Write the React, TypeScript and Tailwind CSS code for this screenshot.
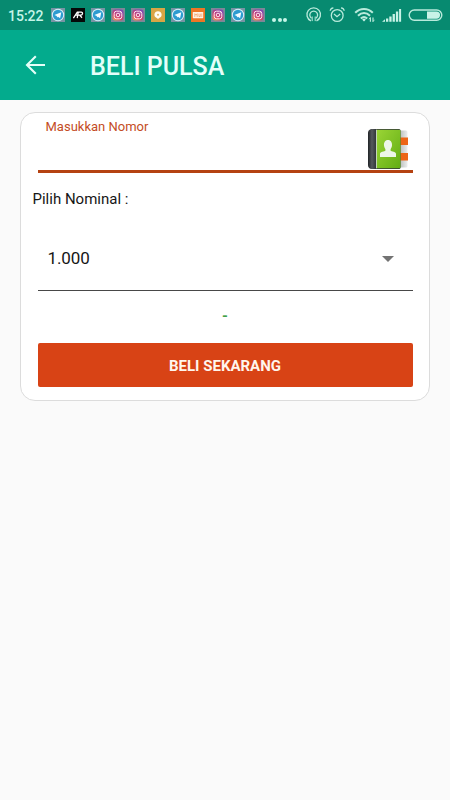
import React from "react";

type Notice = "telegram" | "ap" | "instagram" | "chat" | "mi";

const notices: Notice[] = [
  "telegram", "ap", "telegram", "instagram", "instagram", "chat",
  "telegram", "mi", "instagram", "telegram", "instagram",
];

function NoticeIcon({ kind }: { kind: Notice }) {
  return (
    <svg viewBox="0 0 14 14" className="h-[14px] w-[14px] shrink-0">
      {kind === "telegram" && (
        <>
          <rect width="14" height="14" fill="#7695a5" />
          <circle cx="7" cy="7" r="6.2" fill="#d9f1f8" />
          <circle cx="7" cy="7" r="5.2" fill="#2c9bd0" />
          <path d="M3.4 7 10.3 4.2 9.1 10.2 7 8.7 6 9.6 5.8 7.9Z" fill="#f2fcff" />
        </>
      )}
      {kind === "ap" && (
        <>
          <rect width="14" height="14" fill="#050808" />
          <path d="M2.4 10.2 6.3 4.2H10.3C12.2 4.2 11.8 7.2 9.8 7.2H4.8M7.2 4.5 6.2 10.2M8.9 7.4 11 9.8" fill="none" stroke="#fff" strokeWidth="1.3" />
        </>
      )}
      {kind === "instagram" && (
        <>
          <defs>
            <linearGradient id="insta" x1="0" y1="1" x2="0.6" y2="0">
              <stop offset="0" stopColor="#f6a94f" />
              <stop offset="0.45" stopColor="#d2406f" />
              <stop offset="1" stopColor="#8546b0" />
            </linearGradient>
          </defs>
          <rect width="14" height="14" fill="#7d8798" />
          <rect x="1.5" y="1.5" width="11" height="11" rx="3" fill="url(#insta)" />
          <rect x="3.2" y="3.2" width="7.6" height="7.6" rx="2.3" fill="none" stroke="#ffe5ec" strokeWidth="1" />
          <circle cx="7" cy="7" r="1.8" fill="none" stroke="#ffe5ec" strokeWidth="1" />
          <circle cx="9.2" cy="4.8" r="0.5" fill="#fff" />
        </>
      )}
      {kind === "chat" && (
        <>
          <rect width="14" height="14" fill="#d9a545" />
          <path d="M7 3.2a3.6 3.5 0 0 1 1.2 6.8L7 11.1 5.8 10A3.6 3.5 0 0 1 7 3.2Z" fill="#fffdf2" />
          <circle cx="7" cy="6.7" r="1" fill="#dfb35c" />
        </>
      )}
      {kind === "mi" && (
        <>
          <rect width="14" height="14" fill="#ed7625" />
          <rect x="1.8" y="4" width="10.4" height="6.2" rx="0.6" fill="#fff3e4" />
          <path d="M3.8 9V5.7L5 7.2 6.2 5.7V9M7.9 5.7V8.5H9.3V5.7M10.8 5.5V9" fill="none" stroke="#ef8c4b" strokeWidth="0.6" />
        </>
      )}
    </svg>
  );
}

function SystemIcons() {
  return (
    <svg viewBox="0 0 145 30" className="ml-auto h-[30px] w-[145px]" fill="none" stroke="#b9eadb" strokeWidth="1.3">
      <path d="M5.9 20.8a6.8 6.8 0 1 1 5.6 0" />
      <path d="M6.5 18.2a3.9 3.9 0 1 1 4.4 0" />
      <path d="M7.2 16.5v4.6M10.2 16.5v4.6" strokeWidth="1" />
      <circle cx="32.2" cy="15.5" r="5.9" />
      <path d="M25.2 10.8c.2-1.8 1.4-2.8 3.2-3M39.2 10.8c-.2-1.8-1.4-2.8-3.2-3M29 14l3 2.7 3.2-2.7" />
      <path d="M50.2 12.7c5.3-4.9 12.3-4.9 17.6 0M53 15.7c3.7-3.4 8.3-3.4 12 0M55.8 18.5c2.1-1.8 4.3-1.8 6.4 0" strokeWidth="2.1" />
      <path d="M57.1 19.4 59 21.6 60.9 19.4Q59 18.2 57.1 19.4Z" fill="#c9f3e7" stroke="none" />
      <path d="M65.4 17.5v4.3M68 17.5v4.3" strokeWidth="1.2" />
      <path d="M64 19.2 65.4 17.5M68 21.5 69.4 19.8" strokeWidth="0.9" />
      <g fill="#c9f3e7" stroke="none">
        <path d="M77 21.7 80 19.2V21.7ZM81 18.4h2.3v3.3H81zM84.3 16.4h2.3v5.3h-2.3zM87.6 14.1h2.3v7.6h-2.3zM90.9 11.6h2.3v10.1h-2.3zM94.1 9h2v12.7h-2z" />
      </g>
      <rect x="104.2" y="10" width="32.6" height="10.2" rx="5.1" strokeWidth="1.4" />
      <path d="M122 11.4h9.4a3.65 3.65 0 0 1 0 7.3H122z" fill="#c9f3e7" stroke="none" />
    </svg>
  );
}

function ContactBook() {
  return (
    <svg viewBox="0 0 40 40" className="h-10 w-10 shrink-0">
      <defs>
        <linearGradient id="cover" x1="0" y1="0" x2="1" y2="1">
          <stop stopColor="#9bd536" />
          <stop offset="1" stopColor="#62ad13" />
        </linearGradient>
        <linearGradient id="spine">
          <stop stopColor="#202326" />
          <stop offset="0.12" stopColor="#55595d" />
          <stop offset="0.25" stopColor="#303438" />
          <stop offset="1" stopColor="#303438" />
        </linearGradient>
        <linearGradient id="pages">
          <stop stopColor="#aeb2b1" />
          <stop offset="1" stopColor="#eceeee" />
        </linearGradient>
      </defs>
      <rect x="30" y="1.5" width="9.5" height="37" rx="1.5" fill="url(#pages)" />
      <path d="M32 8.5h8v7.5h-8zM32 24h8v7.5h-8z" fill="#ed6517" />
      <path d="M3 0H31Q32.5 0 32.5 1.5V38.5Q32.5 40 31 40H3Q0 39 0 36V4Q0 1 3 0Z" fill="url(#spine)" />
      <path d="M8.5 0.7H31Q32.5 0.7 32.5 1.7V38.3Q32.5 39.3 31 39.3H8.5Z" fill="url(#cover)" />
      <path d="M8.5 .7v38.6" stroke="#c5d5b7" strokeWidth="1" />
      <path d="M16 16.5c-.7-7.3 8.7-7.3 8 0-.2 1.9-1 2.8-1.4 3.7v1.6c3 1.1 5.4 1.4 5.4 3.2V28H12v-3c0-1.8 2.4-2.1 5.4-3.2v-1.6c-.4-.9-1.2-1.8-1.4-3.7Z" fill="#edf6e8" />
    </svg>
  );
}

export default function App() {
  return (
    <div className="flex h-[800px] w-[450px] flex-col overflow-hidden bg-[#fafafa] font-[Roboto,sans-serif]">
      <div className="flex h-[30px] shrink-0 items-center bg-[#078a70] pl-[8px]">
        <span className="w-[42.5px] pt-[1px] text-[14px] leading-[16px] font-medium text-[#c5f5e8]">15:22</span>
        <div className="flex gap-[6px]">
          {notices.map((kind, i) => <NoticeIcon key={i} kind={kind} />)}
        </div>
        <div className="mt-[9px] ml-[7.5px] flex gap-[1.5px]">
          <i className="h-[4px] w-[4px] rounded-full bg-[#c5f5e8]" />
          <i className="h-[4px] w-[4px] rounded-full bg-[#c5f5e8]" />
          <i className="h-[4px] w-[4px] rounded-full bg-[#c5f5e8]" />
        </div>
        <SystemIcons />
      </div>
      <header className="flex h-[70px] shrink-0 items-center bg-[#03ab8d]">
        <svg viewBox="0 0 20 20" className="ml-[25px] h-5 w-5" fill="none" stroke="#e4fff8" strokeWidth="2.1">
          <path d="M20 10H2M10.8 1.2 2 10l8.8 8.8" />
        </svg>
        <h1 className="ml-[45px] pt-[4px] text-[25px] leading-[30px] font-medium text-[#e4fffa]">BELI PULSA</h1>
      </header>
      <main className="px-5 pt-[12px]">
        <section className="flex h-[289px] flex-col rounded-[15px] border border-[#dcdcdc] bg-white px-[16.5px] text-[#161616]">
          <div className="flex h-[60px] shrink-0 justify-between border-b-[3px] border-[#b54211] pr-[5px] pl-[8px]">
            <label className="pt-[6px] text-[13px] leading-[16px] text-[#c44c24]">Masukkan Nomor</label>
            <div className="pt-[16px]"><ContactBook /></div>
          </div>
          <p className="-ml-[5px] mt-[17px] text-[15px] leading-[18px]">Pilih Nominal :</p>
          <div className="mt-[18px] flex h-[65px] shrink-0 items-center justify-between border-b border-[#484848] pr-[19px] pl-[10px]">
            <span className="text-[17px] leading-[20px] tracking-[-0.1px]">1.000</span>
            <svg viewBox="0 0 12 6" className="mt-[2px] h-[6px] w-[12px]"><path d="M0 0h12L6 6Z" fill="#737373" /></svg>
          </div>
          <div className="flex h-[52px] shrink-0 items-center justify-center pb-[1px] text-[15px] font-bold text-[#42a047]">-</div>
          <button className="h-[44px] w-full shrink-0 rounded-[2px] bg-[#d84315] pt-[2px] text-[15px] leading-[18px] font-bold text-[#fff5ed]">BELI SEKARANG</button>
        </section>
      </main>
    </div>
  );
}
